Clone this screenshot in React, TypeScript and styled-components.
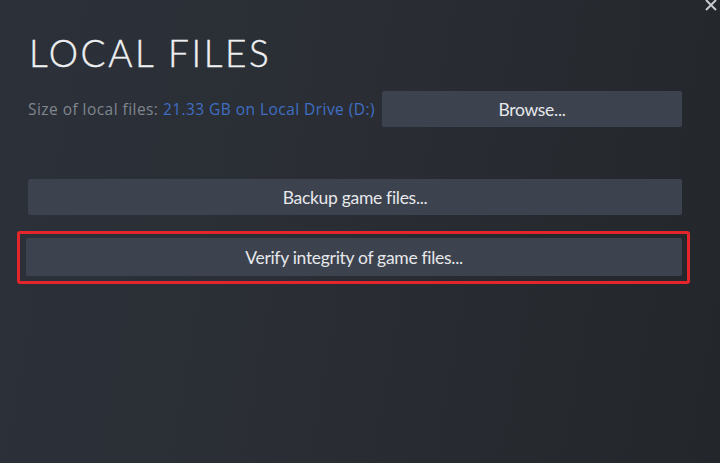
import React from 'react'
import styled, { createGlobalStyle } from 'styled-components'

const GlobalStyle = createGlobalStyle`
  html, body {
    margin: 0;
    padding: 0;
    background: #272a30;
  }
  * {
    box-sizing: border-box;
  }
`

const App: React.FC = () => {
  return (
    <>
      <GlobalStyle />
      <Dialog>
        <CloseButton aria-label="close">
          <svg width="12" height="12" viewBox="0 0 12 12">
            <path d="M1 1 L11 11 M11 1 L1 11" stroke="#c7cacf" strokeWidth="2" />
          </svg>
        </CloseButton>
        <Title>LOCAL FILES</Title>
        <SizeRow>
          <SizeText>
            Size of local files: <DriveLink>21.33 GB on Local Drive (D:)</DriveLink>
          </SizeText>
          <Button $width="300px">Browse...</Button>
        </SizeRow>
        <Actions>
          <Button>Backup game files...</Button>
          <Highlight>
            <Button>Verify integrity of game files...</Button>
          </Highlight>
        </Actions>
      </Dialog>
    </>
  )
}

export default App

const Dialog = styled.div`
  position: relative;
  width: 720px;
  height: 463px;
  overflow: hidden;
  padding: 30px 38px 0 28px;
  background: linear-gradient(100deg, #2c3039 0%, #2a2e34 45%, #23262b 100%);
  font-family: Lato, 'Open Sans', sans-serif;
`

const CloseButton = styled.div`
  position: absolute;
  top: -2px;
  right: 2px;
  width: 14px;
  height: 14px;
  display: flex;
  align-items: center;
  justify-content: center;
`

const Title = styled.h1`
  margin: 0 0 0 1px;
  font-family: Lato, sans-serif;
  font-weight: 300;
  font-size: 37px;
  line-height: 46px;
  letter-spacing: 2.6px;
  color: #eef0f2;
  -webkit-text-stroke: 0.4px #eef0f2;
`

const SizeRow = styled.div`
  display: flex;
  align-items: center;
  justify-content: space-between;
  margin-top: 15px;
`

const SizeText = styled.span`
  font-family: 'Open Sans', sans-serif;
  font-size: 15.5px;
  letter-spacing: 0.45px;
  color: #7f8690;
  white-space: nowrap;
`

const DriveLink = styled.span`
  color: #3f6ec4;
`

const Button = styled.div<{ $width?: string }>`
  width: ${(p) => p.$width || '100%'};
  height: 36px;
  display: flex;
  align-items: center;
  justify-content: center;
  background: #3c424e;
  color: #e6e8eb;
  font-size: 17.5px;
  letter-spacing: -0.3px;
  border-radius: 2px;
`

const Actions = styled.div`
  display: flex;
  flex-direction: column;
  gap: 16px;
  margin-top: 52px;
`

const Highlight = styled.div`
  margin: 0 -8px 0 -11px;
  padding: 4px 5px 5px 6px;
  border: 3px solid #e4262c;
  border-radius: 3px;

  & > div {
    height: 38px;
  }
`
